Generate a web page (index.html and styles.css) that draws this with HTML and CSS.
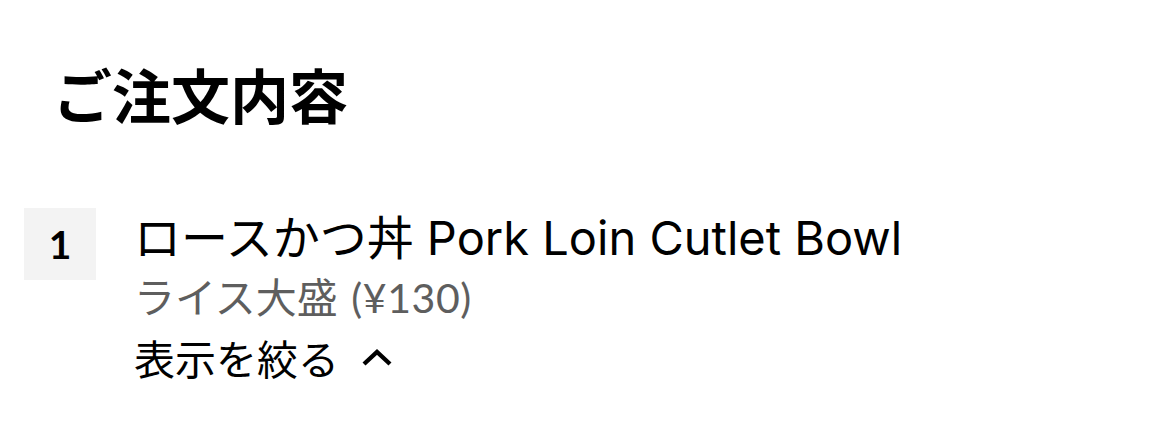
FILE: index.html
```html
<!DOCTYPE html>
<html lang="ja">
<head>
<meta charset="utf-8">
<link rel="stylesheet" href="styles.css">
</head>
<body>
<div class="page">
  <h1 class="heading">ご注文内容</h1>
  <div class="item">
    <div class="qty">1</div>
    <div class="details">
      <div class="title">ロースかつ丼 Pork Loin Cutlet Bowl</div>
      <div class="option">ライス大盛 <span class="price">(¥130)</span></div>
      <button class="toggle">表示を絞る
        <svg class="chev" width="32" height="20" viewBox="0 0 32 20"><path d="M3 17 L16 5 L29 17" fill="none" stroke="#000" stroke-width="4.4" stroke-linejoin="miter"/></svg>
      </button>
    </div>
  </div>
</div>
</body>
</html>
```
FILE: styles.css
```css
html, body {
  margin: 0;
  padding: 0;
  background: #fff;
}
.page {
  width: 1170px;
  height: 442px;
  font-family: "Noto Sans CJK JP", "Noto Sans", sans-serif;
  color: #000;
  box-sizing: border-box;
  padding: 52px 24px 0 24px;
}
.heading {
  margin: 0 0 0 29px;
  font-size: 59px;
  font-weight: 700;
  line-height: 84px;
}
.item {
  display: flex;
  gap: 38px;
  margin-top: 72px;
}
.qty {
  width: 72px;
  height: 72px;
  background: #f3f3f3;
  display: flex;
  align-items: center;
  justify-content: center;
  font-family: "Lato", sans-serif;
  font-size: 39px;
  font-weight: 700;
}
.details {
  display: flex;
  flex-direction: column;
}
.title {
  font-family: "Inter", "Noto Sans CJK JP", sans-serif;
  font-size: 47px;
  line-height: 60px;
}
.option {
  font-family: "Lato", "Noto Sans CJK JP", sans-serif;
  font-size: 41px;
  line-height: 60px;
  color: #5e5e5e;
}
.price {
  letter-spacing: 0.6px;
  margin-left: 3px;
}
.toggle {
  border: 0;
  background: none;
  padding: 0;
  margin: 0;
  font: inherit;
  font-size: 41px;
  line-height: 58px;
  display: flex;
  align-items: center;
  gap: 22px;
  color: #000;
}
.chev {
  display: block;
}
```
